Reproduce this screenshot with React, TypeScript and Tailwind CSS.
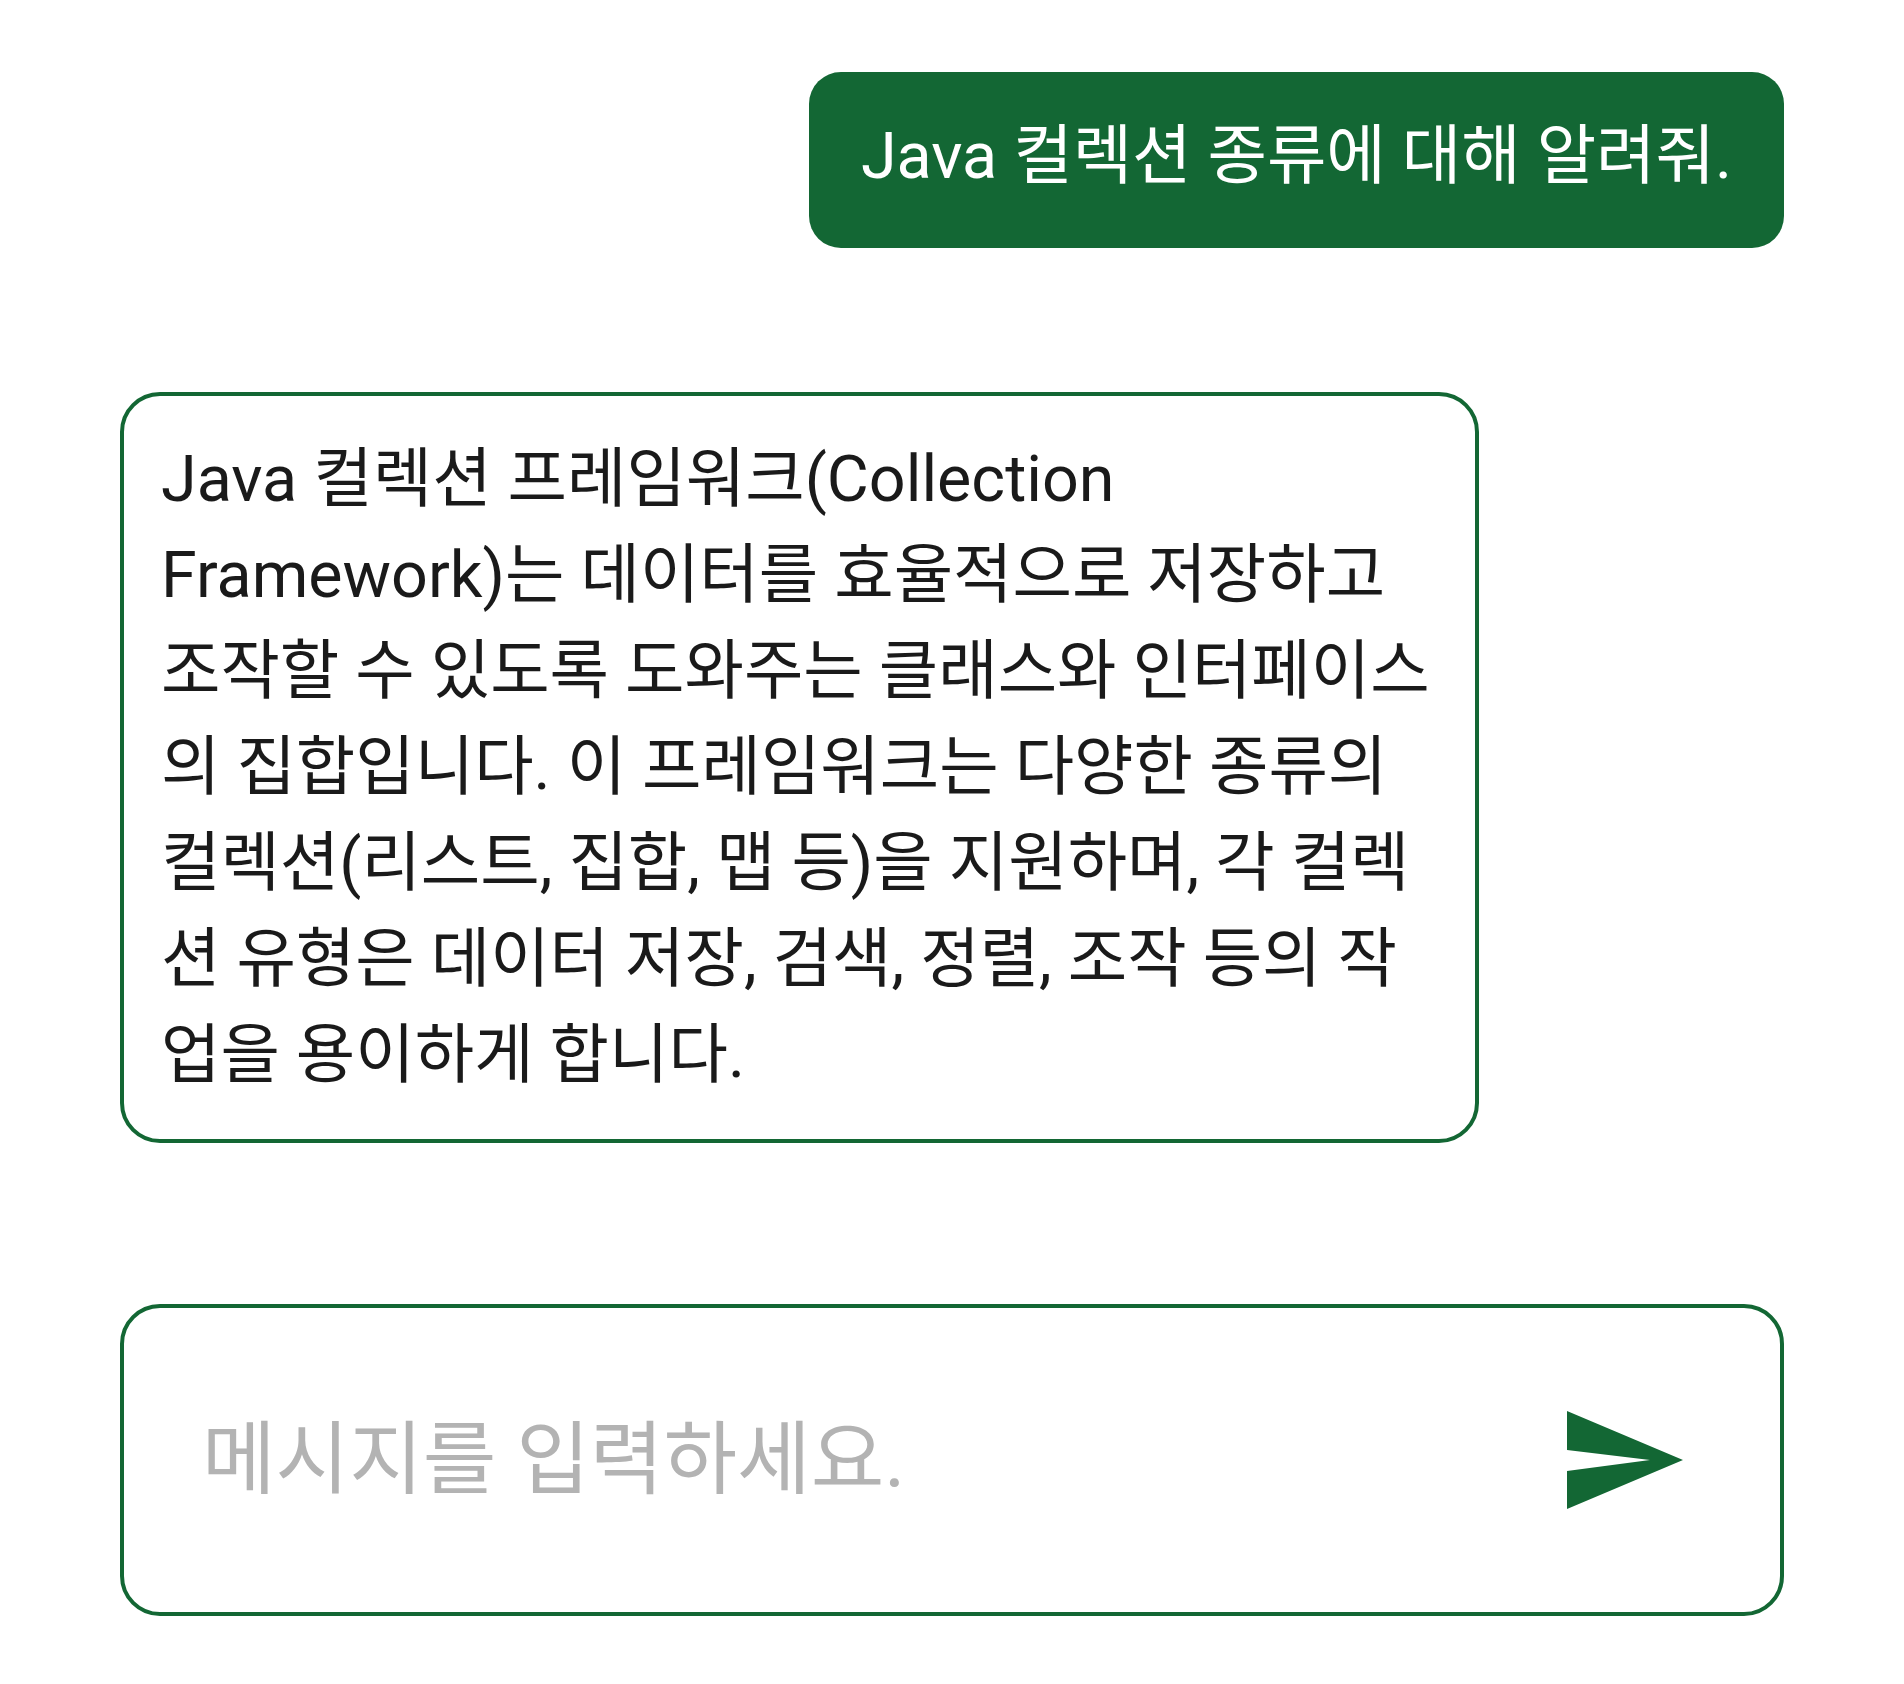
import { useState } from "react";

const GREEN = "#136734";

function SendIcon() {
  return (
    <svg width="116" height="98" viewBox="0 0 116 98" aria-hidden="true">
      <path d="M0 0 L116 49 L0 98 L0 60 L83 49 L0 39 Z" fill={GREEN} />
    </svg>
  );
}

export default function App() {
  const [message, setMessage] = useState("");

  return (
    <div className="min-h-[1684px] bg-white px-[120px] pt-[72px] font-['Roboto','Noto_Sans_CJK_KR',sans-serif]">
      <div className="flex justify-end">
        <div className="rounded-[32px] bg-[#136734] px-[52px] pt-[36px] pb-[44px] text-[64.6px] leading-[96px] text-white">
          Java 컬렉션 종류에 대해 알려줘.
        </div>
      </div>

      <div className="mt-[144px] w-[1359px] rounded-[40px] border-[4px] border-[#136734] pl-[37px] pr-[31px] pt-[35px] pb-[36px] text-[64.6px] leading-[96px] text-[#1a1a1a]">
        Java 컬렉션 프레임워크(Collection Framework)는 데이터를 효율적으로 저장하고 조작할 수 있도록 도와주는 클래스와 인터페이스의 집합입니다. 이 프레임워크는 다양한 종류의 컬렉션(리스트, 집합, 맵 등)을 지원하며, 각 컬렉션 유형은 데이터 저장, 검색, 정렬, 조작 등의 작업을 용이하게 합니다.
      </div>

      <div className="mt-[161px] flex h-[312px] items-center rounded-[40px] border-[4px] border-[#136734] pl-[78px] pr-[97px]">
        <input
          value={message}
          onChange={(e) => setMessage(e.target.value)}
          placeholder="메시지를 입력하세요."
          className="min-w-0 flex-1 bg-transparent text-[80px] text-[#1a1a1a] outline-none placeholder:text-[#b3b3b3]"
        />
        <button type="button" className="ml-6 flex shrink-0 items-center">
          <SendIcon />
        </button>
      </div>
    </div>
  );
}
